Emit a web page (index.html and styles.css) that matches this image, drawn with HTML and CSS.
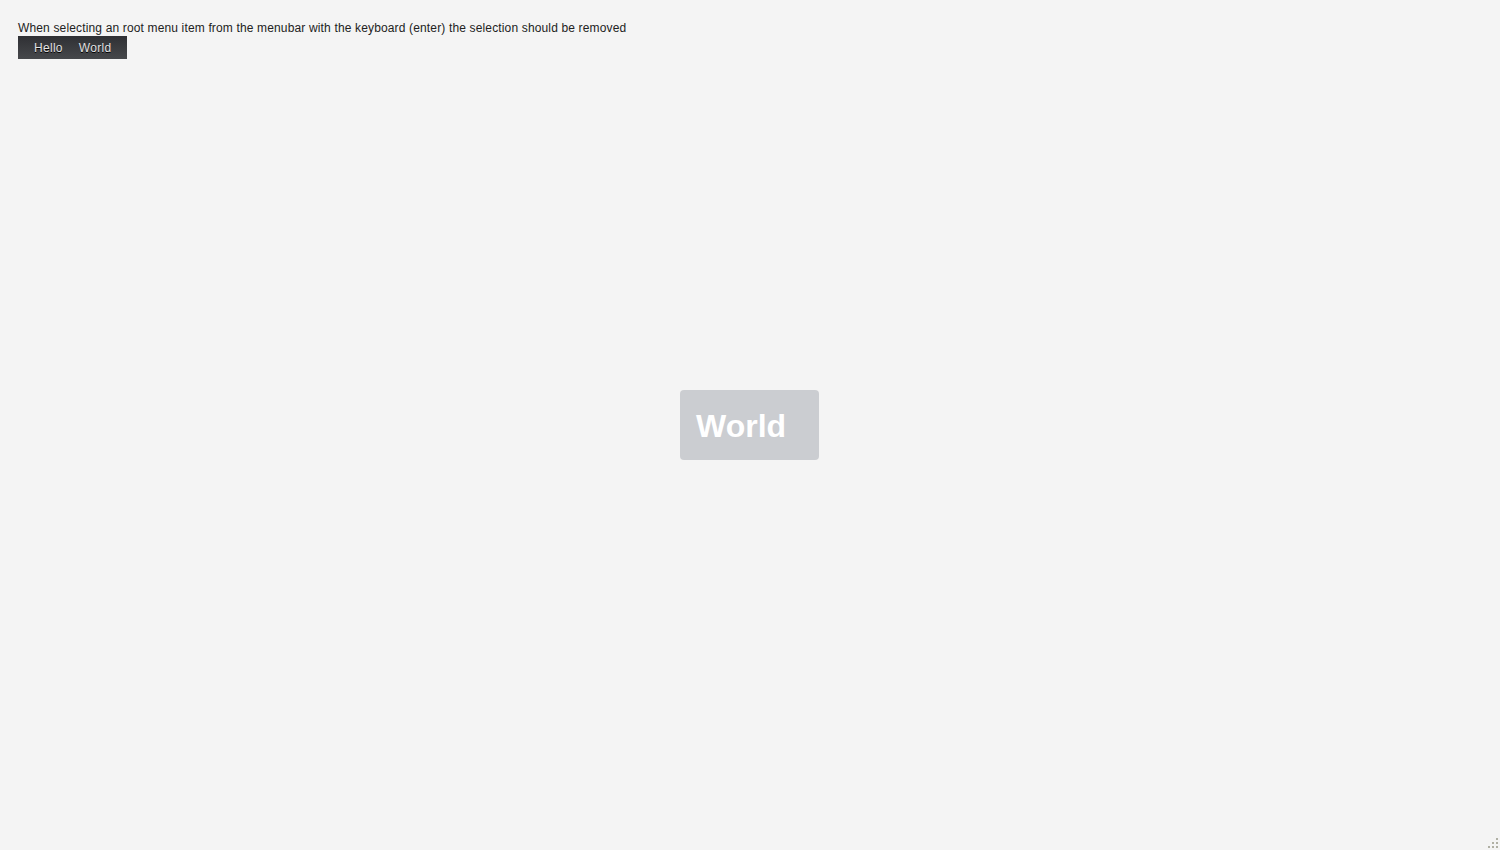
FILE: index.html
```html
<!DOCTYPE html>
<html>
<head>
<meta charset="utf-8">
<title>Menubar test</title>
<link rel="stylesheet" href="styles.css">
</head>
<body>
<div class="page">
  <p class="desc">When selecting an root menu item from the menubar with the keyboard (enter) the selection should be removed</p>
  <nav class="menubar">
    <span class="menu-item">Hello</span>
    <span class="menu-item">World</span>
  </nav>
</div>
<div class="toast">World</div>
<svg class="grip" width="10" height="10" viewBox="0 0 10 10">
  <rect x="8" y="0" width="2" height="2"/>
  <rect x="4" y="4" width="2" height="2"/>
  <rect x="8" y="4" width="2" height="2"/>
  <rect x="0" y="8" width="2" height="2"/>
  <rect x="4" y="8" width="2" height="2"/>
  <rect x="8" y="8" width="2" height="2"/>
</svg>
</body>
</html>
```
FILE: styles.css
```css
html, body {
  margin: 0;
  padding: 0;
  background: #f4f4f4;
  height: 100%;
}
body {
  font-family: "Liberation Sans", Arial, sans-serif;
  font-size: 12px;
  color: #222;
}
.page {
  padding: 21px 18px;
}
.desc {
  margin: 0 0 1px 0;
  line-height: 14px;
  letter-spacing: 0.15px;
}
.menubar {
  display: inline-flex;
  padding: 0 8px;
  height: 23px;
  align-items: flex-start;
  background: linear-gradient(#2f3034, #46484b);
}
.menu-item {
  padding: 1px 8px 0 8px;
  color: #e4e4e4;
  text-shadow: 0 1px 0 #000;
  line-height: 22px;
  letter-spacing: 0.3px;
}
.toast {
  position: fixed;
  left: 680px;
  top: 390px;
  width: 123px;
  height: 70px;
  padding-left: 16px;
  line-height: 72px;
  background: #cbcdd1;
  border-radius: 4px;
  color: #fff;
  font-weight: bold;
  font-size: 32px;
}
.grip {
  position: fixed;
  right: 2px;
  bottom: 2px;
  fill: #b0b0a4;
}
```
